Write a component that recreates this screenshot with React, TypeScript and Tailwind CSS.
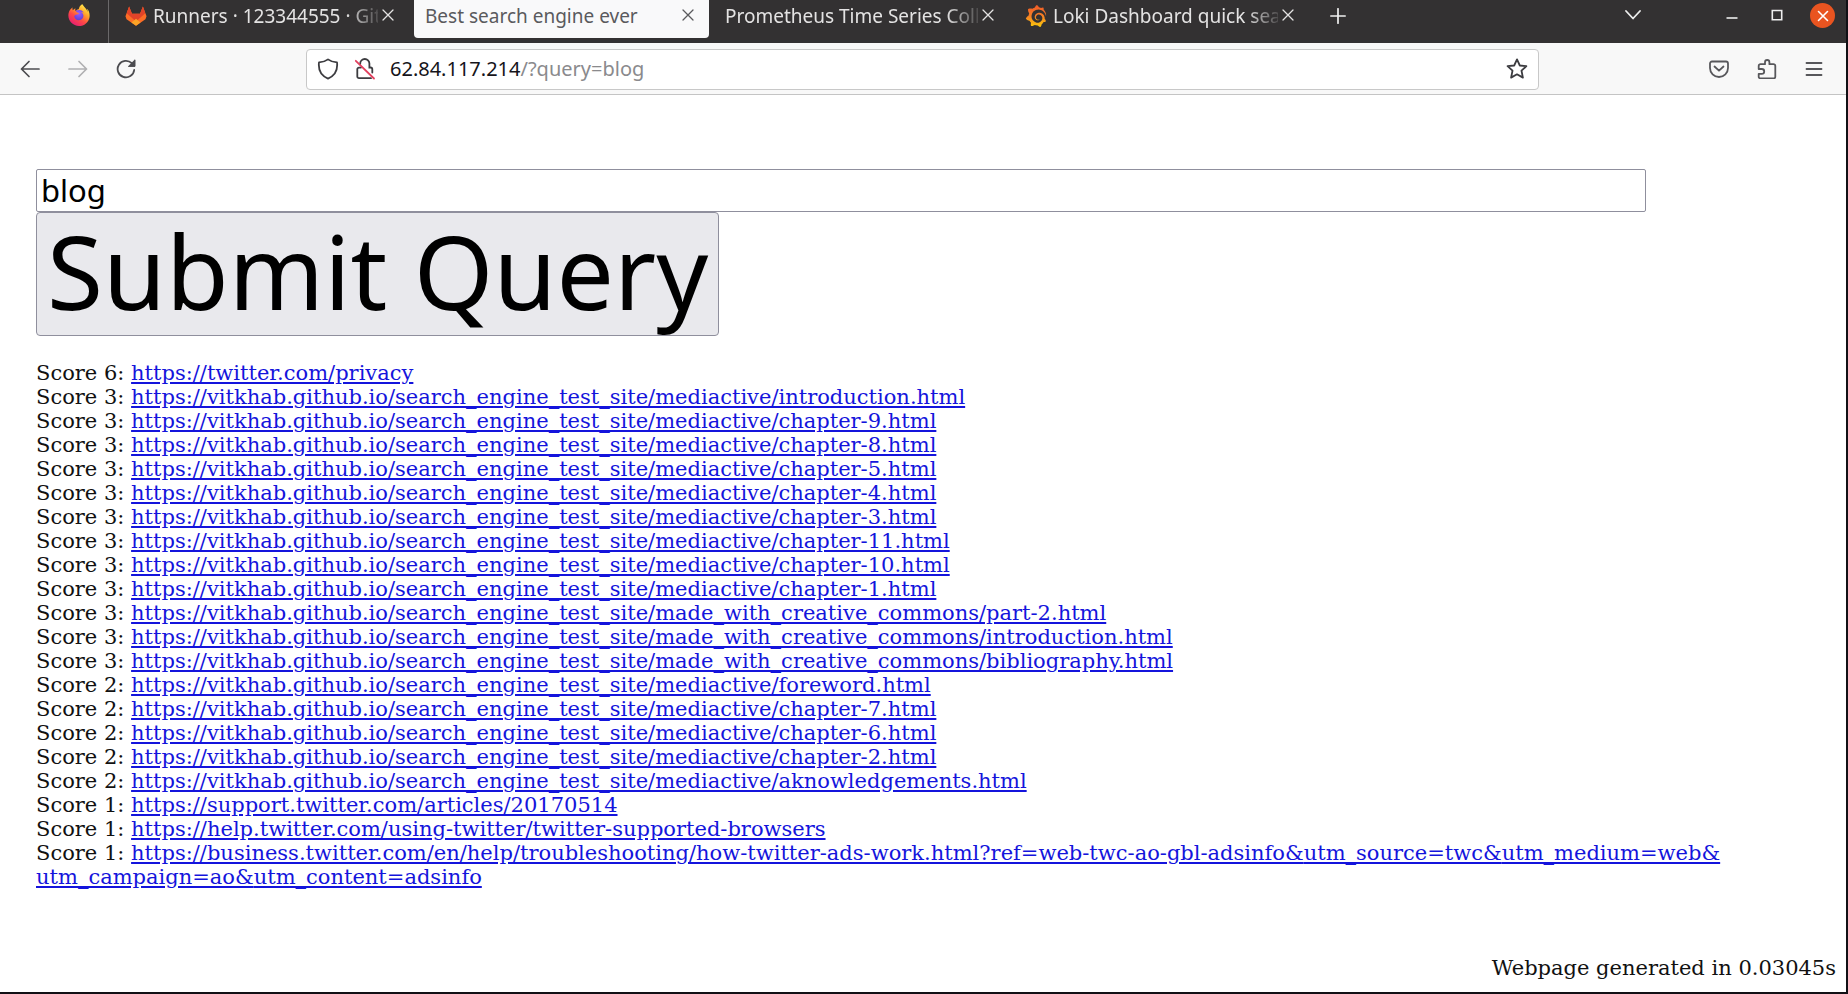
import React, { useState } from "react";
import { SiFirefoxbrowser, SiGrafana } from "react-icons/si";

const BASE = "https://vitkhab.github.io/search_engine_test_site/";

const results: { score: number; parts: string[] }[] = [
  { score: 6, parts: ["https://twitter.com/privacy"] },
  { score: 3, parts: [BASE + "mediactive/introduction.html"] },
  { score: 3, parts: [BASE + "mediactive/chapter-9.html"] },
  { score: 3, parts: [BASE + "mediactive/chapter-8.html"] },
  { score: 3, parts: [BASE + "mediactive/chapter-5.html"] },
  { score: 3, parts: [BASE + "mediactive/chapter-4.html"] },
  { score: 3, parts: [BASE + "mediactive/chapter-3.html"] },
  { score: 3, parts: [BASE + "mediactive/chapter-11.html"] },
  { score: 3, parts: [BASE + "mediactive/chapter-10.html"] },
  { score: 3, parts: [BASE + "mediactive/chapter-1.html"] },
  { score: 3, parts: [BASE + "made_with_creative_commons/part-2.html"] },
  { score: 3, parts: [BASE + "made_with_creative_commons/introduction.html"] },
  { score: 3, parts: [BASE + "made_with_creative_commons/bibliography.html"] },
  { score: 2, parts: [BASE + "mediactive/foreword.html"] },
  { score: 2, parts: [BASE + "mediactive/chapter-7.html"] },
  { score: 2, parts: [BASE + "mediactive/chapter-6.html"] },
  { score: 2, parts: [BASE + "mediactive/chapter-2.html"] },
  { score: 2, parts: [BASE + "mediactive/aknowledgements.html"] },
  { score: 1, parts: ["https://support.twitter.com/articles/20170514"] },
  { score: 1, parts: ["https://help.twitter.com/using-twitter/twitter-supported-browsers"] },
  {
    score: 1,
    parts: [
      "https://business.twitter.com/en/help/troubleshooting/how-twitter-ads-work.html?ref=web-twc-ao-gbl-adsinfo&",
      "utm_source=twc&",
      "utm_medium=web&",
      "utm_campaign=ao&",
      "utm_content=adsinfo",
    ],
  },
];

function FirefoxLogo() {
  return (
    <svg viewBox="0 0 24 24" className="size-[22px] shrink-0" aria-hidden="true">
      <defs>
        <linearGradient id="ff-body" x1="0.85" y1="0.05" x2="0.25" y2="0.95">
          <stop offset="0" stopColor="#fff44f" />
          <stop offset="0.35" stopColor="#ffa42b" />
          <stop offset="0.65" stopColor="#ff4a45" />
          <stop offset="1" stopColor="#e81f72" />
        </linearGradient>
        <radialGradient id="ff-globe" cx="0.5" cy="0.3" r="0.7">
          <stop offset="0" stopColor="#9a5cff" />
          <stop offset="1" stopColor="#4a38c8" />
        </radialGradient>
      </defs>
      <circle cx="12" cy="13" r="7" fill="url(#ff-globe)" />
      <SiFirefoxbrowser size={24} fill="url(#ff-body)" stroke="none" />
    </svg>
  );
}

function GitlabLogo() {
  return (
    <svg viewBox="0 0 24 22" className="h-5 w-[22px] shrink-0" aria-hidden="true">
      <path d="M4.4 0.6 7.6 8.6H16.4L19.6 0.6 23.6 11.4 22.4 14.6 12 21.8 1.6 14.6 0.4 11.4Z" fill="#fc6d26" />
      <path d="M4.4 0.6 7.6 8.6H16.4L19.6 0.6 22.2 8 12 17 1.8 8Z" fill="#e24329" />
      <path d="M12 14 17 18.2 12 21.8 7 18.2Z" fill="#fca326" />
    </svg>
  );
}

function GrafanaLogo() {
  return (
    <svg viewBox="0 0 24 24" className="size-[22px] shrink-0" aria-hidden="true">
      <defs>
        <linearGradient id="gf" x1="0.5" y1="0" x2="0.5" y2="1">
          <stop offset="0" stopColor="#f05a28" />
          <stop offset="0.5" stopColor="#f57f25" />
          <stop offset="1" stopColor="#fbca0a" />
        </linearGradient>
      </defs>
      <SiGrafana size={24} fill="url(#gf)" stroke="none" />
    </svg>
  );
}

function Stroke({ d, className, box = 24, w = 2 }: { d: string; className: string; box?: number; w?: number }) {
  return (
    <svg
      viewBox={`0 0 ${box} ${box}`}
      className={className}
      fill="none"
      stroke="currentColor"
      strokeWidth={w}
      strokeLinecap="round"
      strokeLinejoin="round"
      aria-hidden="true"
    >
      <path d={d} />
    </svg>
  );
}

function Tab({ title, icon, active = false }: { title: string; icon?: React.ReactNode; active?: boolean }) {
  return (
    <div
      className={
        active
          ? "flex h-[38px] w-[295px] items-start rounded-b bg-[#f9f9fa] pt-1 pl-[11px] text-[#5a5a5d]"
          : "flex h-[38px] w-[295px] items-start pt-1 pl-[11px] text-[#e4e3e3]"
      }
    >
      <button type="button" className="flex h-6 min-w-0 flex-1 items-center gap-[6px]">
        {icon}
        <span
          className={
            active
              ? "min-w-0 flex-1 text-left whitespace-nowrap"
              : "min-w-0 flex-1 mask-r-from-[calc(100%-32px)] mask-r-to-[calc(100%+6px)] text-left whitespace-nowrap"
          }
        >
          {title}
        </span>
      </button>
      <button type="button" aria-label={`Close ${title}`} className="mr-[15px] ml-1 flex h-[22px] w-3 items-center justify-center">
        <Stroke box={12} w={1.3} d="M1 1 11 11M11 1 1 11" className="size-3" />
      </button>
    </div>
  );
}

function TabStrip() {
  return (
    <header className="flex h-[43px] items-start bg-[#333132] text-[19px] leading-6">
      <div className="flex h-full w-[109px] justify-end border-r border-[#6b696a] pt-1 pr-[18px]">
        <FirefoxLogo />
      </div>
      <div className="ml-[5px] flex gap-[5px]">
        <Tab title="Runners · 123344555 · Git" icon={<GitlabLogo />} />
        <Tab title="Best search engine ever" active />
        <Tab title="Prometheus Time Series Coll" />
        <Tab title="Loki Dashboard quick sea" icon={<GrafanaLogo />} />
      </div>
      <button type="button" aria-label="New tab" className="mt-2 ml-[21px] text-[#f0f0f0]">
        <Stroke box={16} w={1.7} d="M8 .8V15.2M.8 8H15.2" className="size-4" />
      </button>
      <div className="mr-[11px] ml-auto flex items-start text-[#eeeeee]">
        <button type="button" aria-label="List all tabs" className="mt-[7px] mr-[85px]">
          <Stroke box={16} w={1.8} d="M1 4 8 11.5 15 4" className="size-4" />
        </button>
        <button type="button" aria-label="Minimize" className="mt-[9px] mr-[33px]">
          <svg viewBox="0 0 12 12" className="size-3" aria-hidden="true">
            <path d="M.5 9H11.5" stroke="currentColor" strokeWidth="1.6" />
          </svg>
        </button>
        <button type="button" aria-label="Maximize" className="mt-[9px] mr-[27px]">
          <svg viewBox="0 0 12 12" className="size-3" aria-hidden="true">
            <path d="M1.3 1.5H10.7V10.7H1.3Z" fill="none" stroke="currentColor" strokeWidth="1.6" />
          </svg>
        </button>
        <button type="button" aria-label="Close window" className="mt-[3px] flex size-[25px] items-center justify-center rounded-full bg-[#e95420] text-white">
          <Stroke box={12} w={1.6} d="M1.5 1.5 10.5 10.5M10.5 1.5 1.5 10.5" className="size-3" />
        </button>
      </div>
    </header>
  );
}

function Toolbar() {
  return (
    <nav className="flex h-[52px] items-center border-b border-[#c4c4c4] bg-[#f8f8f8] pt-px pl-5 text-[#4c4c50]">
      <button type="button" aria-label="Back">
        <Stroke box={20} w={1.7} d="M19 10H1.5M9 2.5 1.5 10 9 17.5" className="size-5" />
      </button>
      <button type="button" aria-label="Forward" className="ml-7 text-[#b0b0b2]">
        <Stroke box={20} w={1.7} d="M1 10H18.5M11 2.5 18.5 10 11 17.5" className="size-5" />
      </button>
      <button type="button" aria-label="Reload" className="ml-7">
        <svg viewBox="0 0 20 20" className="size-5" aria-hidden="true">
          <path d="M18.2 11A8.3 8.3 0 1 1 15.8 4.2" fill="none" stroke="currentColor" strokeWidth="1.8" strokeLinecap="round" />
          <path d="M19 .8V7.4H12.4Z" fill="currentColor" stroke="currentColor" strokeLinejoin="round" />
        </svg>
      </button>
      <div className="mx-[170px] flex h-[41px] min-w-0 flex-1 items-center rounded border border-[#c8c8c8] bg-white px-[10px] text-[#3c3c40]">
        <button type="button" aria-label="Tracking protection">
          <Stroke box={22} w={1.8} d="M11 1.4C13.5 3.3 16.5 4.1 20 4.3 20.8 11 18.5 17.5 11 20.6 3.5 17.5 1.2 11 2 4.3 5.5 4.1 8.5 3.3 11 1.4Z" className="size-[22px]" />
        </button>
        <button type="button" aria-label="Connection is not secure" className="ml-[15px]">
          <svg viewBox="0 0 22 22" className="size-[22px]" aria-hidden="true">
            <g fill="none" stroke="currentColor" strokeWidth="1.8" strokeLinecap="round">
              <path d="M6.2 6V5.6A4.6 4.6 0 0 1 15.4 5.6V9.5H16.5A1.8 1.8 0 0 1 18.3 11.3V14.5" />
              <path d="M7 9.6H5A1.7 1.7 0 0 0 3.3 11.3V18.5A1.7 1.7 0 0 0 5 20.2H17" />
            </g>
            <path d="M1.8 2.8 20 20.5" stroke="#e2405f" strokeWidth="1.8" strokeLinecap="round" />
          </svg>
        </button>
        <a href="/?query=blog" className="ml-[14px] flex-1 truncate text-[20px] leading-7 text-[#8a8a8d]">
          <span className="text-[#15141a]">62.84.117.214</span>/?query=blog
        </a>
        <button type="button" aria-label="Bookmark this page">
          <Stroke box={22} w={1.8} d="M11 1.4 13.8 7.5 20.4 8.2 15.5 12.7 16.9 19.6 11 16.3 5.1 19.6 6.5 12.7 1.6 8.2 8.2 7.5Z" className="size-[22px]" />
        </button>
      </div>
      <div className="mr-[23px] flex items-center gap-7 text-[#57575b]">
        <button type="button" aria-label="Save to Pocket">
          <Stroke box={20} w={1.8} d="M3 2.5H17A2 2 0 0 1 19 4.5V9A9 9 0 0 1 1 9V4.5A2 2 0 0 1 3 2.5ZM5.5 7.5 10 11.7 14.5 7.5" className="size-5" />
        </button>
        <button type="button" aria-label="Extensions">
          <Stroke box={20} w={1.8} d="M8 5.2V3.2A2.2 2.2 0 0 1 12.4 3.2V5.2H16.5A1.8 1.8 0 0 1 18.3 7V17.8A1.5 1.5 0 0 1 16.8 19.3H3.2A1.5 1.5 0 0 1 1.7 17.8V14.8H4.8A2.4 2.4 0 0 0 4.8 10H1.7V7A1.8 1.8 0 0 1 3.5 5.2Z" className="size-5" />
        </button>
        <button type="button" aria-label="Open application menu">
          <Stroke box={18} w={1.8} d="M1.5 3H16.5M1.5 9H16.5M1.5 15H16.5" className="size-[18px]" />
        </button>
      </div>
    </nav>
  );
}

export default function App() {
  const [query, setQuery] = useState("blog");
  return (
    <div className="flex min-h-screen flex-col border-r-2 border-b-2 border-[#111015] bg-white font-['Noto_Sans',sans-serif]">
      <TabStrip />
      <Toolbar />
      <main className="flex flex-1 flex-col px-9 pt-[74px] font-['DejaVu_Serif',serif] text-[21px] leading-6 text-[#111111]">
        <form className="mr-[164px] flex flex-col items-start font-['Noto_Sans',sans-serif] text-black" onSubmit={(e) => e.preventDefault()}>
          <input
            type="text"
            aria-label="Query"
            value={query}
            onChange={(e) => setQuery(e.target.value)}
            className="h-[43px] w-full rounded-xs border border-[#8f8f9d] bg-white px-1 pb-px text-[31px] leading-10"
          />
          <button type="submit" className="h-[124px] rounded border border-[#8f8f9d] bg-[#e9e9ed] px-[10px] pb-[6px] text-[102px] leading-[116px]">
            Submit Query
          </button>
        </form>
        <ul className="mt-[25px]">
          {results.map((r) => (
            <li key={r.parts.join("")}>
              Score {r.score}:{" "}
              <a href={r.parts.join("")} className="text-[#1414dc] underline">
                {r.parts.map((p, i) => (
                  <React.Fragment key={p}>
                    {i > 0 && <wbr />}
                    {p}
                  </React.Fragment>
                ))}
              </a>
            </li>
          ))}
        </ul>
      </main>
      <footer className="px-[10px] pb-3 text-right font-['DejaVu_Serif',serif] text-[21px] leading-6 text-[#111111]">
        Webpage generated in 0.03045s
      </footer>
    </div>
  );
}
